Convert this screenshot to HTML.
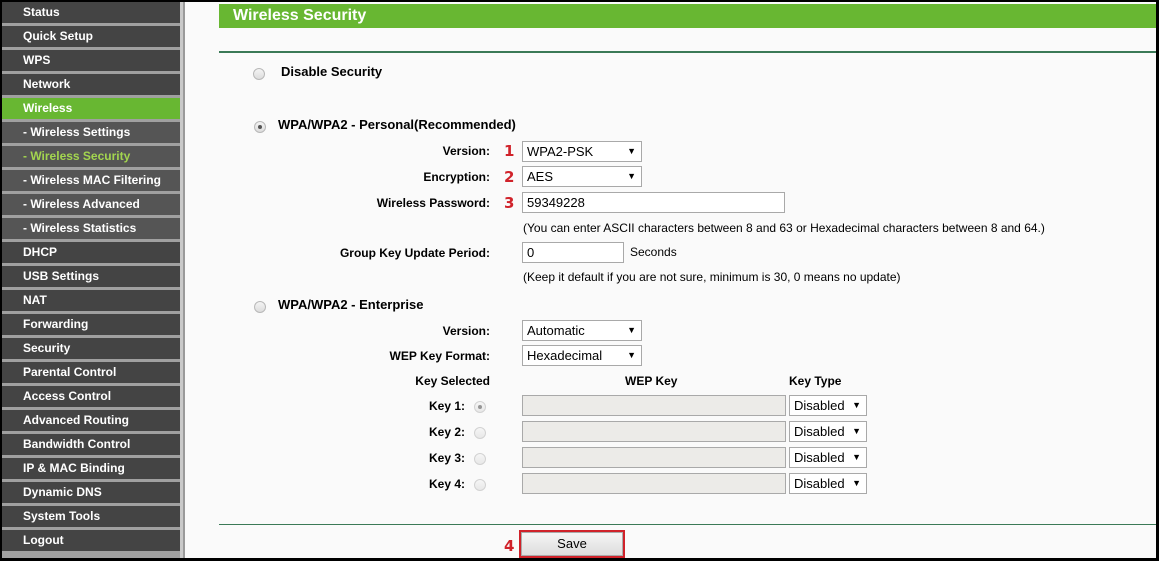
<!DOCTYPE html>
<html><head><meta charset="utf-8"><style>
*{margin:0;padding:0;box-sizing:border-box}
body{width:1159px;height:561px;background:#000;position:relative;overflow:hidden;font-family:"Liberation Sans",Arial,sans-serif}
#main{position:absolute;left:2px;top:2px;width:1154px;height:556px;background:#fafafa}
#side{position:absolute;left:2px;top:2px;width:178px;height:556px;background:#a0a0a0}
.it{position:absolute;left:0;width:178px;height:21px;background:#444;color:#fff;font-weight:bold;font-size:12px;line-height:21px;padding-left:21px}
.it.g{background:#68b732}
.it.sub{background:#555}
.it.cur{color:#a3d54f}
#sb{position:absolute;left:180px;top:2px;width:5px;height:556px;background:#c9c9c9;border-right:2px solid #9a9a9a}
.a{position:absolute;font-size:12px;color:#000;white-space:nowrap}
.b{font-weight:bold}
.lbl{position:absolute;right:669px;font-size:12px;font-weight:bold;white-space:nowrap}
.num{position:absolute;left:504px;color:#d0222a;font-weight:bold;font-size:15px;font-family:"DejaVu Sans","Liberation Sans",sans-serif}
.sel,.inp{position:absolute;background:#fff;border:1px solid #a9a9a9;font-size:13px;padding-left:4px;line-height:19px;height:21px}
.sel:after{content:"▼";position:absolute;right:5px;top:0;font-size:9px}
.dis{background:#ecebe8}
.r{position:absolute;width:12px;height:12px;border-radius:50%;border:1px solid #b8b8b8;background:linear-gradient(#f4f4f4,#dcdcdc)}
.r.on:after{content:"";position:absolute;left:3px;top:3px;width:4px;height:4px;border-radius:50%;background:#555}
.r.lt{opacity:.6}
.line{position:absolute;left:219px;width:937px;height:2px;background:#3b7a57}
</style></head><body>
<div id="main"></div>
<div id="side">
<div class="it" style="top:0">Status</div>
<div class="it" style="top:24px">Quick Setup</div>
<div class="it" style="top:48px">WPS</div>
<div class="it" style="top:72px">Network</div>
<div class="it g" style="top:96px">Wireless</div>
<div class="it sub" style="top:120px">- Wireless Settings</div>
<div class="it sub cur" style="top:144px">- Wireless Security</div>
<div class="it sub" style="top:168px">- Wireless MAC Filtering</div>
<div class="it sub" style="top:192px">- Wireless Advanced</div>
<div class="it sub" style="top:216px">- Wireless Statistics</div>
<div class="it" style="top:240px">DHCP</div>
<div class="it" style="top:264px">USB Settings</div>
<div class="it" style="top:288px">NAT</div>
<div class="it" style="top:312px">Forwarding</div>
<div class="it" style="top:336px">Security</div>
<div class="it" style="top:360px">Parental Control</div>
<div class="it" style="top:384px">Access Control</div>
<div class="it" style="top:408px">Advanced Routing</div>
<div class="it" style="top:432px">Bandwidth Control</div>
<div class="it" style="top:456px">IP &amp; MAC Binding</div>
<div class="it" style="top:480px">Dynamic DNS</div>
<div class="it" style="top:504px">System Tools</div>
<div class="it" style="top:528px">Logout</div>
</div>
<div id="sb"></div>
<div style="position:absolute;left:219px;top:4px;width:937px;height:24px;background:#68b732;color:#fff;font-weight:bold;font-size:16px;line-height:24px;padding-left:14px">Wireless Security</div>
<div class="line" style="top:51px"></div>
<div class="r" style="left:253px;top:68px"></div>
<div class="a b" style="left:281px;top:64px;font-size:13px">Disable Security</div>
<div class="r on" style="left:254px;top:121px"></div>
<div class="a b" style="left:278px;top:117px;font-size:13px">WPA/WPA2 - Personal(Recommended)</div>
<div class="lbl" style="top:144px">Version:</div><div class="num" style="top:142px">1</div>
<div class="sel" style="left:522px;top:141px;width:120px">WPA2-PSK</div>
<div class="lbl" style="top:170px">Encryption:</div><div class="num" style="top:168px">2</div>
<div class="sel" style="left:522px;top:166px;width:120px">AES</div>
<div class="lbl" style="top:196px">Wireless Password:</div><div class="num" style="top:194px">3</div>
<div class="inp" style="left:522px;top:192px;width:263px">59349228</div>
<div class="a" style="left:523px;top:221px">(You can enter ASCII characters between 8 and 63 or Hexadecimal characters between 8 and 64.)</div>
<div class="lbl" style="top:246px">Group Key Update Period:</div>
<div class="inp" style="left:522px;top:242px;width:102px">0</div>
<div class="a" style="left:630px;top:245px">Seconds</div>
<div class="a" style="left:523px;top:270px">(Keep it default if you are not sure, minimum is 30, 0 means no update)</div>
<div class="r" style="left:254px;top:301px"></div>
<div class="a b" style="left:278px;top:297px;font-size:13px">WPA/WPA2 - Enterprise</div>
<div class="lbl" style="top:324px">Version:</div>
<div class="sel" style="left:522px;top:320px;width:120px">Automatic</div>
<div class="lbl" style="top:349px">WEP Key Format:</div>
<div class="sel" style="left:522px;top:345px;width:120px">Hexadecimal</div>
<div class="lbl" style="top:374px">Key Selected</div>
<div class="a b" style="left:625px;top:374px">WEP Key</div>
<div class="a b" style="left:789px;top:374px">Key Type</div>
<div class="a b" style="left:429px;top:399px">Key 1:</div><div class="r on lt" style="left:474px;top:401px"></div>
<div class="inp dis" style="left:522px;top:395px;width:264px"></div><div class="sel" style="left:789px;top:395px;width:78px">Disabled</div>
<div class="a b" style="left:429px;top:425px">Key 2:</div><div class="r lt" style="left:474px;top:427px"></div>
<div class="inp dis" style="left:522px;top:421px;width:264px"></div><div class="sel" style="left:789px;top:421px;width:78px">Disabled</div>
<div class="a b" style="left:429px;top:451px">Key 3:</div><div class="r lt" style="left:474px;top:453px"></div>
<div class="inp dis" style="left:522px;top:447px;width:264px"></div><div class="sel" style="left:789px;top:447px;width:78px">Disabled</div>
<div class="a b" style="left:429px;top:477px">Key 4:</div><div class="r lt" style="left:474px;top:479px"></div>
<div class="inp dis" style="left:522px;top:473px;width:264px"></div><div class="sel" style="left:789px;top:473px;width:78px">Disabled</div>
<div class="line" style="top:524px;height:1px"></div>
<div class="num" style="top:537px">4</div>
<div style="position:absolute;left:519px;top:530px;width:106px;height:28px;border:2px solid #d0222a;background:linear-gradient(#f6f6f6,#dcdcdc);font-size:13px;text-align:center;line-height:24px;box-shadow:inset 0 0 0 1px #aaa">Save</div>
</body></html>
